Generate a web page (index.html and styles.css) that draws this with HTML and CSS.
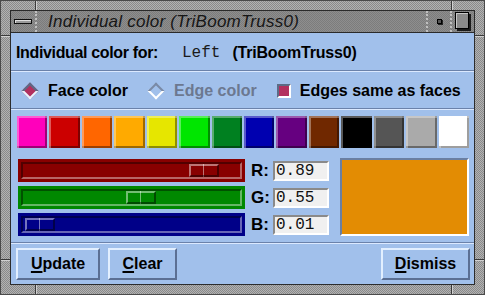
FILE: index.html
```html
<!DOCTYPE html>
<html>
<head>
<meta charset="utf-8">
<link rel="stylesheet" href="styles.css">
</head>
<body>
<div class="frame">
  <span class="tick tick-t1"></span><span class="tick tick-t2"></span>
  <span class="tick tick-b1"></span><span class="tick tick-b2"></span>
  <span class="tick tick-l1"></span><span class="tick tick-r1"></span>
  <span class="tick tick-l2"></span><span class="tick tick-r2"></span>
  <div class="titlebar">
    <div class="tb-menu"><span class="menu-bar"></span></div>
    <div class="tb-title">Individual color (TriBoomTruss0)</div>
    <div class="tb-btn"><span class="min-dot"></span></div>
    <div class="tb-btn"><span class="max-box"></span></div>
  </div>
  <div class="content">
    <div class="header">
      <span class="hdr-label">Individual color for:</span>
      <span class="hdr-mono">Left</span>
      <span class="hdr-name">(TriBoomTruss0)</span>
    </div>
    <div class="sep"></div>
    <div class="radios">
      <span class="diamond on"><span></span></span>
      <span class="rlabel">Face color</span>
      <span class="diamond off"><span></span></span>
      <span class="rlabel disabled">Edge color</span>
      <span class="check"></span>
      <span class="rlabel">Edges same as faces</span>
    </div>
    <div class="sep"></div>
    <div class="swatches">
      <span class="sw sw-magenta"></span>
      <span class="sw sw-red"></span>
      <span class="sw sw-orange"></span>
      <span class="sw sw-amber"></span>
      <span class="sw sw-yellow"></span>
      <span class="sw sw-green"></span>
      <span class="sw sw-dkgreen"></span>
      <span class="sw sw-blue"></span>
      <span class="sw sw-purple"></span>
      <span class="sw sw-brown"></span>
      <span class="sw sw-black"></span>
      <span class="sw sw-dkgray"></span>
      <span class="sw sw-ltgray"></span>
      <span class="sw sw-white"></span>
    </div>
    <div class="mixer">
      <div class="slider slider-r"><div class="track"><div class="thumb" style="left:166px"></div></div></div>
      <div class="clabel">R:</div>
      <div class="field">0.89</div>
      <div class="preview" style="background:#e38c03"></div>
      <div class="slider slider-g"><div class="track"><div class="thumb" style="left:103px"></div></div></div>
      <div class="clabel">G:</div>
      <div class="field">0.55</div>
      <div class="slider slider-b"><div class="track"><div class="thumb" style="left:2px"></div></div></div>
      <div class="clabel">B:</div>
      <div class="field">0.01</div>
    </div>
    <div class="sep sep-bottom"></div>
    <div class="buttons">
      <button class="btn btn-update"><u>U</u>pdate</button>
      <button class="btn btn-clear"><u>C</u>lear</button>
      <button class="btn btn-dismiss"><u>D</u>ismiss</button>
    </div>
  </div>
</div>
</body>
</html>
```
FILE: styles.css
```css
* { box-sizing: border-box; }
html, body { margin: 0; padding: 0; }
body {
  width: 485px;
  height: 295px;
  overflow: hidden;
  font-family: "Liberation Sans", Arial, sans-serif;
  background: #8c8c8c;
}
.frame {
  position: relative;
  width: 485px;
  height: 295px;
  padding: 9px;
  display: flex;
  flex-direction: column;
  border: 1px solid #4a4a4a;
  background: repeating-conic-gradient(#b2b2b2 0 25%, #8a8a8a 0 50%) 0 0 / 2px 2px;
}
.tick { position: absolute; background: #3a3a3a; }
.tick-t1 { left: 34px; top: 0; width: 1px; height: 9px; box-shadow: 1px 0 0 #d0d0d0; }
.tick-t2 { left: 450px; top: 0; width: 1px; height: 9px; box-shadow: 1px 0 0 #d0d0d0; }
.tick-b1 { left: 34px; bottom: 0; width: 1px; height: 9px; box-shadow: 1px 0 0 #d0d0d0; }
.tick-b2 { left: 450px; bottom: 0; width: 1px; height: 9px; box-shadow: 1px 0 0 #d0d0d0; }
.tick-l1 { left: 0; top: 34px; width: 9px; height: 1px; box-shadow: 0 1px 0 #d0d0d0; }
.tick-r1 { right: 0; top: 34px; width: 9px; height: 1px; box-shadow: 0 1px 0 #d0d0d0; }
.tick-l2 { left: 0; bottom: 34px; width: 9px; height: 1px; box-shadow: 0 1px 0 #d0d0d0; }
.tick-r2 { right: 0; bottom: 34px; width: 9px; height: 1px; box-shadow: 0 1px 0 #d0d0d0; }

.titlebar {
  height: 23px;
  flex: none;
  display: flex;
  border: 1px solid #2a2a2a;
  background: repeating-conic-gradient(#8e8e8e 0 25%, #7c7c7c 0 50%) 0 0 / 2px 2px;
}
.tb-menu {
  width: 26px;
  display: flex;
  align-items: center;
  justify-content: center;
  border-right: 2px dotted #c0c0c0;
}
.menu-bar {
  width: 18px;
  height: 5px;
  border: 1px solid #111;
  background: #9a9a9a;
  box-shadow: inset 1px 1px 0 #e0e0e0;
}
.tb-title {
  flex: 1;
  padding-left: 11px;
  font-style: italic;
  font-size: 17px;
  line-height: 21px;
  color: #161616;
  letter-spacing: 0.25px;
}
.tb-btn {
  width: 24px;
  display: flex;
  align-items: center;
  justify-content: center;
  border-left: 2px dotted #c0c0c0;
}
.min-dot {
  width: 5px;
  height: 5px;
  border: 1px solid #000;
  background: #555;
  box-shadow: 1px 1px 0 #222;
}
.max-box {
  width: 14px;
  height: 17px;
  border: 1px solid #000;
  background: #8a8a8a;
  box-shadow: inset 1px 1px 0 #c8c8c8, 2px 2px 0 #1a1a1a;
  margin-left: -2px;
  margin-top: -2px;
}

.content {
  flex: 1;
  display: flex;
  flex-direction: column;
  background: #a1c0eb;
  border-left: 1px solid #2c2c2c;
  border-right: 1px solid #2c2c2c;
  border-bottom: 1px solid #2c2c2c;
  color: #000;
}
.header {
  height: 37px;
  flex: none;
  display: flex;
  align-items: center;
  padding-left: 5px;
  padding-top: 2px;
}
.hdr-label { font-weight: bold; font-size: 16px; letter-spacing: -0.35px; }
.hdr-mono {
  font-family: "Liberation Mono", "Courier New", monospace;
  font-size: 16px;
  margin-left: 24px;
  color: #1a1a1a;
}
.hdr-name { font-weight: bold; font-size: 16px; margin-left: 12px; letter-spacing: -0.2px; }
.sep {
  height: 2px;
  flex: none;
  border-top: 1px solid #6b82aa;
  border-bottom: 1px solid #dbe9ff;
}
.radios {
  height: 36px;
  flex: none;
  display: flex;
  align-items: center;
  padding-left: 10px;
  padding-top: 1px;
}
.diamond {
  width: 18px;
  height: 18px;
  display: flex;
  align-items: center;
  justify-content: center;
}
.diamond span {
  width: 12px;
  height: 12px;
  transform: rotate(45deg);
  border-top: 2px solid #5c6b86;
  border-left: 2px solid #5c6b86;
  border-bottom: 2px solid #e8f6ff;
  border-right: 2px solid #e8f6ff;
}
.diamond.on span { background: #b2305f; }
.diamond.off span { background: #a1c0eb; border-top-color: #7a8aa6; border-left-color: #7a8aa6; border-bottom-color: #ffffff; border-right-color: #ffffff; }
.rlabel {
  font-weight: bold;
  font-size: 16px;
  margin-left: 9px;
}
.rlabel.disabled { color: #6c7890; }
.diamond.off { margin-left: 19px; }
.check {
  width: 14px;
  height: 14px;
  margin-left: 20px;
  background: #b2305f;
  border-top: 2px solid #5c6b86;
  border-left: 2px solid #5c6b86;
  border-bottom: 2px solid #ffffff;
  border-right: 2px solid #ffffff;
}
.swatches {
  flex: none;
  display: grid;
  grid-template-columns: repeat(14, 1fr);
  column-gap: 2px;
  padding: 6px 5px 0 6px;
}
.sw {
  height: 32px;
  box-shadow: inset 2px 2px 0 rgba(255,255,255,0.35), inset -2px -2px 0 rgba(0,0,0,0.38);
}
.sw-magenta { background: #ff00bb; }
.sw-red { background: #cc0000; }
.sw-orange { background: #ff6600; }
.sw-amber { background: #ffaa00; }
.sw-yellow { background: #e6e600; }
.sw-green { background: #00e600; }
.sw-dkgreen { background: #008020; }
.sw-blue { background: #0000b0; }
.sw-purple { background: #660080; }
.sw-brown { background: #702800; }
.sw-black { background: #000000; }
.sw-dkgray { background: #555555; }
.sw-ltgray { background: #aaaaaa; }
.sw-white { background: #ffffff; }

.mixer {
  flex: none;
  display: grid;
  grid-template-columns: 233px 22px 67px 129px;
  grid-template-rows: 23px 23px 23px;
  row-gap: 4px;
  margin-top: 11px;
  padding-left: 7px;
}
.slider {
  width: 227px;
  height: 23px;
  padding: 3px;
}
.slider-r { background: #880000; }
.slider-g { background: #008800; }
.slider-b { background: #000088; }
.track {
  position: relative;
  height: 100%;
  border-top: 2px solid rgba(0,0,0,0.4);
  border-left: 2px solid rgba(0,0,0,0.4);
  border-bottom: 2px solid rgba(255,255,255,0.4);
  border-right: 2px solid rgba(255,255,255,0.4);
}
.thumb {
  position: absolute;
  top: 0;
  bottom: 0;
  width: 30px;
  border-top: 2px solid rgba(255,255,255,0.45);
  border-left: 2px solid rgba(255,255,255,0.45);
  border-bottom: 2px solid rgba(0,0,0,0.45);
  border-right: 2px solid rgba(0,0,0,0.45);
  background: linear-gradient(to right, transparent 12px, rgba(255,255,255,0.45) 12px, rgba(255,255,255,0.45) 13px, transparent 13px);
}
.clabel {
  font-weight: bold;
  font-size: 17px;
  line-height: 23px;
}
.field {
  width: 56px;
  height: 20px;
  align-self: center;
  background: #f0f0f0;
  border-top: 2px solid #8a8a8a;
  border-left: 2px solid #8a8a8a;
  border-bottom: 2px solid #ffffff;
  border-right: 2px solid #ffffff;
  font-family: "Liberation Mono", "Courier New", monospace;
  font-size: 16px;
  line-height: 16px;
  padding-left: 1px;
  color: #111;
}
.preview {
  grid-column: 4;
  grid-row: 1 / 4;
  margin-top: -1px;
  height: 78px;
  border-top: 2px solid #6a7fa2;
  border-left: 2px solid #6a7fa2;
  border-bottom: 2px solid #ffffff;
  border-right: 2px solid #ffffff;
}
.sep-bottom { margin-top: 6px; }
.buttons {
  flex: 1;
  display: flex;
  align-items: flex-start;
  padding: 4px 4px 0 5px;
}
.btn {
  height: 32px;
  padding: 0;
  margin: 0;
  font-family: "Liberation Sans", Arial, sans-serif;
  font-weight: bold;
  font-size: 16px;
  color: #000;
  background: #a1c0eb;
  border-top: 2px solid #e2efff;
  border-left: 2px solid #e2efff;
  border-bottom: 2px solid #5b6f93;
  border-right: 2px solid #5b6f93;
}
.btn u { text-decoration-thickness: 2px; text-underline-offset: 2px; }
.btn-update { width: 84px; }
.btn-clear { width: 69px; margin-left: 8px; }
.btn-dismiss { width: 89px; margin-left: auto; }
```
